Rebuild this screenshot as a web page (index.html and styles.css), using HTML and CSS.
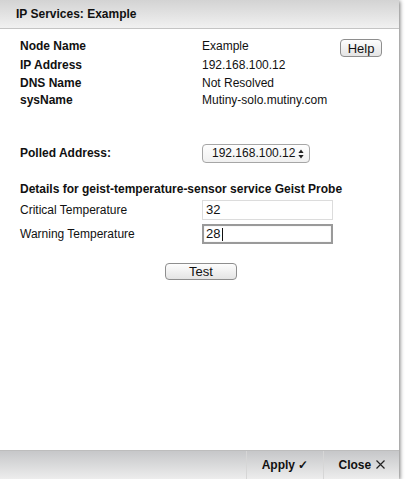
FILE: index.html
```html
<!DOCTYPE html>
<html lang="en">
  <head>
    <meta charset="UTF-8" />
    <meta name="viewport" content="width=device-width, initial-scale=1.0" />
    <title>IP Services: Example</title>
    <link rel="stylesheet" href="styles.css">
  </head>
  <body>
    <div class="dialog">
      <header class="dialog-header">IP Services: Example</header>

      <main class="dialog-body">
        <div class="info">
          <span class="label">Node Name</span>
          <span>Example</span>
          <button class="btn help-btn">Help</button>
          <span class="label">IP Address</span>
          <span>192.168.100.12</span>
          <span></span>
          <span class="label">DNS Name</span>
          <span>Not Resolved</span>
          <span></span>
          <span class="label">sysName</span>
          <span>Mutiny-solo.mutiny.com</span>
          <span></span>
        </div>

        <div class="polled">
          <label class="label" for="polled">Polled Address:</label>
          <div class="select-wrap">
            <select id="polled">
              <option>192.168.100.12</option>
            </select>
            <svg class="select-arrows" width="6" height="10" viewBox="0 0 6 10">
              <path d="M3 0.5 L5.6 4 L0.4 4 Z" fill="#222" />
              <path d="M3 9.5 L5.6 6 L0.4 6 Z" fill="#222" />
            </svg>
          </div>
        </div>

        <h2 class="details-title">Details for geist-temperature-sensor service Geist Probe</h2>
        <div class="fields">
          <label for="critical">Critical Temperature</label>
          <input type="text" id="critical" value="32" />
          <label for="warning">Warning Temperature</label>
          <div class="input-focus">
            <input type="text" id="warning" class="focused" value="28" />
            <span class="caret"></span>
          </div>
        </div>

        <div class="test-row">
          <button class="btn test-btn">Test</button>
        </div>
      </main>

      <footer class="dialog-footer">
        <button class="footer-btn">Apply &#10003;</button>
        <button class="footer-btn">Close
          <svg class="close-x" width="9" height="9" viewBox="0 0 9 9">
            <path d="M0.5 0.5 L8.5 8.5 M8.5 0.5 L0.5 8.5" stroke="#222" stroke-width="1.2" />
          </svg>
        </button>
      </footer>
    </div>
  </body>
</html>
```

FILE: styles.css
```css
body {
  font-family: "Liberation Sans", Arial, sans-serif;
  font-size: 12px;
  margin: 0;
  padding: 0;
  background-color: #fff;
  color: #111;
}

.dialog {
  width: 399px;
  height: 479px;
  display: flex;
  flex-direction: column;
  background-color: #fff;
  box-shadow: 1px 1px 4px rgba(0, 0, 0, 0.55);
}

.dialog-header {
  height: 29px;
  box-sizing: border-box;
  padding: 0 16px;
  display: flex;
  align-items: center;
  font-weight: bold;
  font-size: 12px;
  background: linear-gradient(#d3d3d3, #f1f1f1);
  border-bottom: 1px solid #c4c4c4;
}

.dialog-body {
  flex: 1;
  padding: 9px 17px 0 20px;
}

.label {
  font-weight: bold;
}

.info {
  display: grid;
  grid-template-columns: 182px 1fr auto;
  line-height: 17.5px;
}

.btn {
  font-family: "Liberation Sans", Arial, sans-serif;
  font-size: 12px;
  color: #111;
  background: linear-gradient(#fdfdfd, #e4e4e4);
  border: 1px solid #8e8e8e;
  border-radius: 4px;
  padding: 0;
  cursor: pointer;
}

.help-btn {
  width: 42px;
  height: 18px;
  margin-top: 1px;
  font-size: 13px;
}

.polled {
  display: grid;
  grid-template-columns: 182px auto;
  align-items: center;
  margin-top: 34px;
}

.select-wrap {
  position: relative;
  width: 108px;
}

.select-wrap select {
  appearance: none;
  -webkit-appearance: none;
  width: 108px;
  height: 19px;
  padding: 0 0 0 9px;
  font-family: "Liberation Sans", Arial, sans-serif;
  font-size: 12px;
  color: #111;
  background: linear-gradient(#fefefe, #f0f0f0);
  border: 1px solid #a6a6a6;
  border-radius: 4px;
}

.select-arrows {
  position: absolute;
  right: 6px;
  top: 5px;
}

.details-title {
  font-size: 12px;
  font-weight: bold;
  margin: 19px 0 3px;
  line-height: 15px;
}

.fields {
  display: grid;
  grid-template-columns: 182px 131px;
  row-gap: 4px;
  align-items: center;
}

.fields input {
  width: 131px;
  height: 20px;
  box-sizing: border-box;
  padding: 0 3px;
  font-family: "Liberation Sans", Arial, sans-serif;
  font-size: 13px;
  color: #111;
  border: 1px solid #dcdcdc;
  outline: none;
}

.fields input.focused {
  border: 2px solid #9a9a9a;
  box-shadow: inset 0 0 1px #bbb;
  padding: 0 2px;
}

.input-focus {
  position: relative;
  height: 20px;
}

.caret {
  position: absolute;
  left: 20px;
  top: 4px;
  width: 1px;
  height: 13px;
  background-color: #111;
}

.test-row {
  display: flex;
  justify-content: center;
  margin-top: 19px;
}

.test-btn {
  width: 72px;
  height: 17px;
  font-size: 13px;
}

.dialog-footer {
  height: 29px;
  display: flex;
  justify-content: flex-end;
  background: linear-gradient(#c6c7c9, #ededed);
  border-top: 1px solid #bdbdbd;
  box-sizing: border-box;
}

.footer-btn {
  font-family: "Liberation Sans", Arial, sans-serif;
  font-size: 12px;
  font-weight: bold;
  color: #111;
  background: transparent;
  border: none;
  border-left: 1px solid #d6d6d6;
  width: 77px;
  padding: 0;
  cursor: pointer;
}

.footer-btn:last-child {
  width: 76px;
}

.close-x {
  margin-left: 1px;
}
```
